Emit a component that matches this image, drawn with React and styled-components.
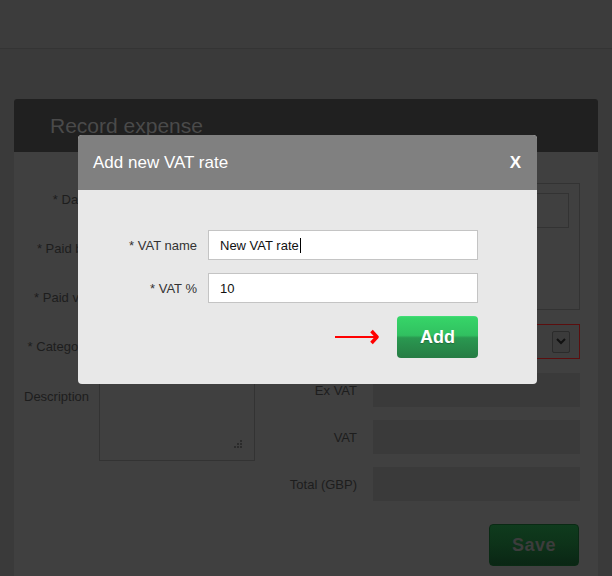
import React from 'react';
import styled, { createGlobalStyle } from 'styled-components';

const GlobalStyle = createGlobalStyle`
  html, body { margin: 0; padding: 0; background: #3a3a3a; }
  body { font-family: "Liberation Sans", Arial, sans-serif; font-size: 13px; }
  * { box-sizing: border-box; }
`;

const Page = styled.div`
  position: relative;
  height: 576px;
  background: #3a3a3a;
  overflow: hidden;
`;

const TopBar = styled.div`
  height: 49px;
  background: #3c3c3c;
  border-bottom: 1px solid #343434;
`;

const Card = styled.section`
  margin: 50px 14px 0;
  background: #404040;
  border-radius: 3px 3px 0 0;
  min-height: 480px;
`;

const CardHeader = styled.h1`
  margin: 0;
  height: 53px;
  display: flex;
  align-items: center;
  padding-left: 36px;
  background: #202020;
  border-radius: 3px 3px 0 0;
  color: #4a4a4a;
  font-size: 21px;
  font-weight: normal;
`;

const CardBody = styled.div`
  padding: 30px 18px 0 10px;
`;

const TopSection = styled.div`
  display: grid;
  grid-template-columns: 1fr 207px;
  column-gap: 18px;
`;

const Rows = styled.div`
  display: grid;
  grid-auto-rows: 35px;
  row-gap: 14px;
`;

const FormRow = styled.div`
  display: grid;
  grid-template-columns: 65px 1fr;
  column-gap: 10px;
  align-items: ${({ $top }) => ($top ? 'start' : 'center')};
`;

const Label = styled.label`
  text-align: right;
  white-space: nowrap;
  color: #1d1d1d;
  line-height: 15px;
  padding-top: ${({ $top }) => ($top ? `${$top}px` : '0')};
`;

const DarkInput = styled.div`
  height: 35px;
  background: #3a3a3a;
`;

const ReceiptBox = styled.div`
  height: 127px;
  margin-top: 1px;
  border: 1px solid #333;
  padding: 9px 10px;
  display: flex;
  justify-content: flex-end;
  align-items: flex-start;
`;

const ReceiptButton = styled.div`
  width: 110px;
  height: 35px;
  border: 1px solid #333;
`;

const CategoryRow = styled(FormRow)`
  margin-top: 9px;
`;

const Select = styled.div`
  height: 35px;
  border: 1px solid #5b0e0e;
  background: #3e3e3e;
  display: flex;
  justify-content: flex-end;
  align-items: center;
  padding-right: 9px;
`;

const SelectArrow = styled.span`
  width: 18px;
  height: 22px;
  border: 1px solid #2b2b2b;
  border-radius: 2px;
  background: #3b3b3b;
  display: flex;
  align-items: center;
  justify-content: center;
`;

const BottomSection = styled.div`
  margin-top: 14px;
  display: flex;
  justify-content: space-between;
  align-items: flex-start;
`;

const DescRow = styled.div`
  display: grid;
  grid-template-columns: 65px 156px;
  column-gap: 10px;
  align-items: start;
`;

const TextAreaBox = styled.div`
  position: relative;
  height: 88px;
  border: 1px solid #333;
`;

const Grip = styled.svg`
  position: absolute;
  right: 12px;
  bottom: 12px;
`;

const Fields = styled.div`
  display: grid;
  grid-template-columns: auto 207px;
  column-gap: 16px;
  row-gap: 13px;
  align-items: center;
`;

const Field = styled.div`
  height: 34px;
  background: #3a3a3a;
`;

const Actions = styled.div`
  display: flex;
  justify-content: flex-end;
  margin-top: 23px;
  padding-right: 1px;
`;

const SaveButton = styled.button`
  width: 90px;
  height: 42px;
  padding-top: 2px;
  border: 1px solid #0a2a14;
  border-radius: 4px;
  background: linear-gradient(#0f3b1d, #0d3219 50%, #0a2614);
  color: #3c3c3c;
  font-family: inherit;
  font-size: 18px;
  font-weight: bold;
  letter-spacing: 0.5px;
`;

const Modal = styled.div`
  position: absolute;
  left: 78px;
  top: 135px;
  width: 459px;
  border-radius: 4px;
  overflow: hidden;
  background: #e8e8e8;
`;

const ModalHeader = styled.div`
  height: 55px;
  background: #808080;
  display: flex;
  justify-content: space-between;
  align-items: center;
  padding: 0 16px 0 15px;
  color: #fff;
`;

const ModalTitle = styled.h2`
  margin: 0;
  font-size: 17px;
  font-weight: normal;
`;

const CloseButton = styled.button`
  border: none;
  background: none;
  padding: 0;
  color: #fff;
  font-family: inherit;
  font-size: 17px;
  font-weight: bold;
`;

const ModalBody = styled.div`
  padding: 40px 59px 26px 0;
`;

const ModalGrid = styled.div`
  display: grid;
  grid-template-columns: 119px 270px;
  column-gap: 11px;
  row-gap: 13px;
  align-items: center;
`;

const ModalLabel = styled.label`
  text-align: right;
  color: #333;
  font-size: 13px;
`;

const TextBox = styled.div`
  height: 30px;
  border: 1px solid #c4c4c4;
  background: #fff;
  padding-left: 11px;
  display: flex;
  align-items: center;
  color: #111;
  font-size: 13px;
`;

const Caret = styled.span`
  display: inline-block;
  width: 1px;
  height: 15px;
  margin-left: 1px;
  background: #000;
`;

const ButtonRow = styled.div`
  display: flex;
  justify-content: flex-end;
  align-items: center;
  gap: 18px;
  margin-top: 13px;
`;

const AddButton = styled.button`
  width: 81px;
  height: 42px;
  border: none;
  border-radius: 4px;
  background: linear-gradient(#45e07a 0%, #36d468 4%, #31c060 46%, #2a9850 52%, #267c44 100%);
  color: #fff;
  font-family: inherit;
  font-size: 18px;
  font-weight: bold;
  text-shadow: 0 1px 1px rgba(0, 0, 0, 0.25);
`;

export default function App() {
  return (
    <Page>
      <GlobalStyle />
      <TopBar />
      <Card>
        <CardHeader>Record expense</CardHeader>
        <CardBody>
          <TopSection>
            <Rows>
              <FormRow><Label>* Date</Label><DarkInput /></FormRow>
              <FormRow><Label>* Paid by</Label><DarkInput /></FormRow>
              <FormRow><Label>* Paid via</Label><DarkInput /></FormRow>
            </Rows>
            <ReceiptBox><ReceiptButton /></ReceiptBox>
          </TopSection>
          <CategoryRow $top>
            <Label $top={15}>* Category</Label>
            <Select>
              <SelectArrow>
                <svg width="10" height="7" viewBox="0 0 10 7">
                  <path d="M1 1 L5 5 L9 1" fill="none" stroke="#111" strokeWidth="2" />
                </svg>
              </SelectArrow>
            </Select>
          </CategoryRow>
          <BottomSection>
            <DescRow>
              <Label $top={16}>Description</Label>
              <TextAreaBox>
                <Grip width="10" height="10" viewBox="0 0 10 10">
                  {[[8, 0], [8, 3], [5, 3], [8, 6], [5, 6], [2, 6]].map(([x, y]) => (
                    <rect key={`${x}-${y}`} x={x} y={y + 2} width="2" height="2" fill="#2b2b2b" />
                  ))}
                </Grip>
              </TextAreaBox>
            </DescRow>
            <Fields>
              <Label>Ex VAT</Label><Field />
              <Label>VAT</Label><Field />
              <Label>Total (GBP)</Label><Field />
            </Fields>
          </BottomSection>
          <Actions><SaveButton>Save</SaveButton></Actions>
        </CardBody>
      </Card>

      <Modal>
        <ModalHeader>
          <ModalTitle>Add new VAT rate</ModalTitle>
          <CloseButton>X</CloseButton>
        </ModalHeader>
        <ModalBody>
          <ModalGrid>
            <ModalLabel>* VAT name</ModalLabel>
            <TextBox>New VAT rate<Caret /></TextBox>
            <ModalLabel>* VAT %</ModalLabel>
            <TextBox>10</TextBox>
          </ModalGrid>
          <ButtonRow>
            <svg width="44" height="16" viewBox="0 0 44 16">
              <line x1="0" y1="8" x2="40" y2="8" stroke="#f00" strokeWidth="2" />
              <path d="M36.5 2 L42 8 L36.5 14" fill="none" stroke="#f00" strokeWidth="3.5" strokeLinejoin="round" />
            </svg>
            <AddButton>Add</AddButton>
          </ButtonRow>
        </ModalBody>
      </Modal>
    </Page>
  );
}
